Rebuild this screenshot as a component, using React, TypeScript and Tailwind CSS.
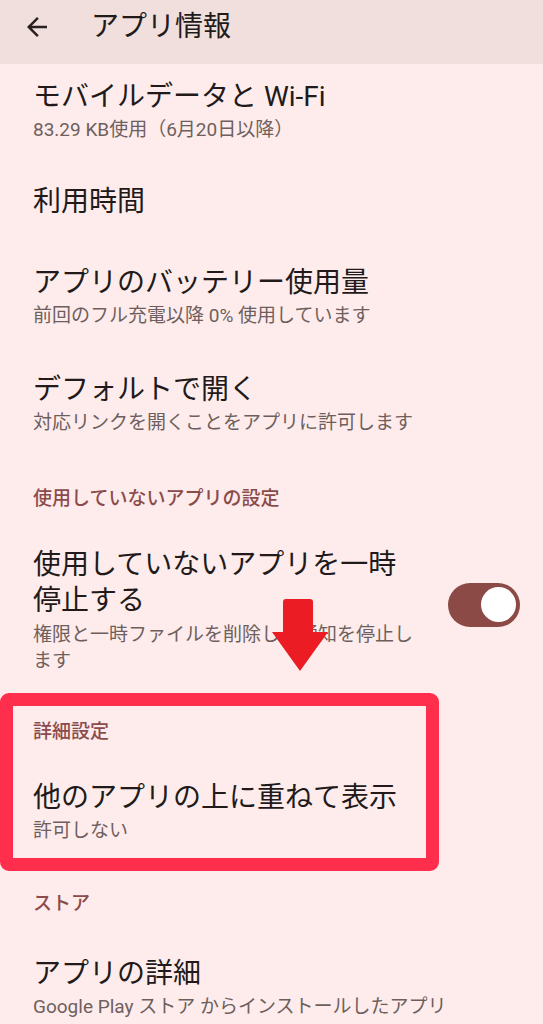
import React from "react";

const font = { fontFamily: '"Roboto", "Noto Sans CJK JP", sans-serif' };

function Item({ title, sub, pad = "py-[21px]" }: { title: string; sub?: string; pad?: string }) {
  return (
    <div className={`pl-[33px] pr-6 ${pad}`}>
      <p className="text-[28px] leading-[36px] text-[#221a1a]">{title}</p>
      {sub && <p className="mt-[2px] text-[19px] leading-[26px] text-[#6e5f5e]">{sub}</p>}
    </div>
  );
}

function SectionHeader({ label, pad = "pt-[29px] pb-[14px]" }: { label: string; pad?: string }) {
  return (
    <p className={`pl-[33px] ${pad} text-[19px] leading-[26px] font-medium text-[#8c4b4b]`}>
      {label}
    </p>
  );
}

export default function App() {
  return (
    <div className="w-[543px] h-[1024px] overflow-hidden bg-[#fdeceb]" style={font}>
      {/* top bar */}
      <div className="h-[64px] bg-[#f0dfdc] pt-[9px]">
        <div className="flex items-center h-[36px]">
          <svg width="30" height="30" viewBox="0 0 24 24" className="ml-[22px]" fill="#2a2020">
            <path d="M20 11H7.83l5.59-5.59L12 4l-8 8 8 8 1.41-1.41L7.83 13H20v-2z" />
          </svg>
          <h1 className="ml-[39px] text-[28px] leading-[36px] text-[#221a1a]">アプリ情報</h1>
        </div>
      </div>

      <Item title="モバイルデータと Wi-Fi" sub="83.29 KB使用（6月20日以降）" pad="pt-[15px] pb-[20px]" />
      <Item title="利用時間" pad="pt-[21px] pb-[24px]" />
      <Item title="アプリのバッテリー使用量" sub="前回のフル充電以降 0% 使用しています" pad="pt-[21px] pb-[22px]" />
      <Item title="デフォルトで開く" sub="対応リンクを開くことをアプリに許可します" />

      <SectionHeader label="使用していないアプリの設定" />
      <div className="relative flex items-center pl-[33px] pt-[21px] pb-[19px]">
        <div className="w-[385px]">
          <p className="text-[28px] leading-[36px] text-[#221a1a]">使用していないアプリを一時停止する</p>
          <p className="mt-[3px] text-[19px] leading-[26px] text-[#6e5f5e]">
            権限と一時ファイルを削除し、通知を停止します
          </p>
        </div>
        <div className="ml-auto mr-[23px] mb-[12px] flex items-center justify-end w-[72px] h-[44px] rounded-full bg-[#8b4a45] pr-[4px]">
          <div className="w-[35px] h-[35px] rounded-full bg-white" />
        </div>
        {/* annotation arrow */}
        <svg width="56" height="72" viewBox="0 0 56 72" className="absolute left-[272px] top-[73px]">
          <path d="M14 0h24a3 3 0 0 1 3 3v30h15L28 72 0 33h11V3a3 3 0 0 1 3-3z" fill="#ec1c24" />
        </svg>
      </div>

      <div className="relative">
        <SectionHeader label="詳細設定" pad="pt-[26px] pb-[14px]" />
        <Item title="他のアプリの上に重ねて表示" sub="許可しない" />
        <div className="absolute left-0 top-0 w-[439px] bottom-[-6px] border-[13px] border-[#fe2e4c] rounded-[9px] pointer-events-none" />
      </div>
      <SectionHeader label="ストア" pad="pt-[26px] pb-[18px]" />
      <Item title="アプリの詳細" sub="Google Play ストア からインストールしたアプリ" />
    </div>
  );
}
